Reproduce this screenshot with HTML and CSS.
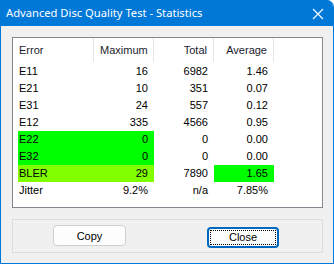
FILE: index.html
```html
<!DOCTYPE html>
<html>
<head>
<meta charset="utf-8">
<link rel="stylesheet" href="styles.css">
</head>
<body>
<div class="window">
  <div class="titlebar">
    <span class="title">Advanced Disc Quality Test - Statistics</span>
    <svg class="close-x" width="12" height="12" viewBox="0 0 12 12"><path d="M1 1 L11 11 M11 1 L1 11" stroke="#fff" stroke-width="1.1" fill="none"/></svg>
  </div>
  <div class="content">
    <div class="list">
      <div class="row header">
        <div class="c c1">Error</div>
        <div class="c c2">Maximum</div>
        <div class="c c3">Total</div>
        <div class="c c4">Average</div>
      </div>
      <div class="row"><div class="c c1"><span>E11</span></div><div class="c c2">16</div><div class="c c3">6982</div><div class="c c4">1.46</div></div>
      <div class="row"><div class="c c1"><span>E21</span></div><div class="c c2">10</div><div class="c c3">351</div><div class="c c4">0.07</div></div>
      <div class="row"><div class="c c1"><span>E31</span></div><div class="c c2">24</div><div class="c c3">557</div><div class="c c4">0.12</div></div>
      <div class="row"><div class="c c1"><span>E12</span></div><div class="c c2">335</div><div class="c c3">4566</div><div class="c c4">0.95</div></div>
      <div class="row"><div class="c c1 green"><span>E22</span></div><div class="c c2 green">0</div><div class="c c3">0</div><div class="c c4">0.00</div></div>
      <div class="row"><div class="c c1 green"><span>E32</span></div><div class="c c2 green">0</div><div class="c c3">0</div><div class="c c4">0.00</div></div>
      <div class="row"><div class="c c1 lime"><span>BLER</span></div><div class="c c2 lime">29</div><div class="c c3">7890</div><div class="c c4 green">1.65</div></div>
      <div class="row"><div class="c c1"><span>Jitter</span></div><div class="c c2">9.2%</div><div class="c c3">n/a</div><div class="c c4">7.85%</div></div>
    </div>
    <div class="group">
      <button class="btn copy">Copy</button>
      <button class="btn close"><span class="focus">Close</span></button>
    </div>
  </div>
</div>
</body>
</html>
```

FILE: styles.css
```css
html, body {
  margin: 0;
  padding: 0;
  background: #ffffff;
}
body {
  font-family: "Liberation Sans", Arial, sans-serif;
  font-size: 11px;
  color: #000;
}
.window {
  width: 334px;
  height: 264px;
  box-sizing: border-box;
  border: 1px solid #0078d7;
  border-top: none;
  background: #f0f0f0;
  display: flex;
  flex-direction: column;
  border-top-right-radius: 7px;
  overflow: hidden;
}
.titlebar {
  height: 26px;
  margin: 0 -1px;
  background: #0078d7;
  color: #fff;
  display: flex;
  align-items: center;
  padding: 0 10px 0 6px;
}
.title {
  font-family: "Noto Sans", "Open Sans", sans-serif;
  font-size: 11.2px;
  line-height: 26px;
  flex: 1;
}
.close-x {
  margin-top: 1px;
}
.content {
  padding: 11px 10px 0 11px;
}
.list {
  width: 311px;
  height: 171px;
  box-sizing: border-box;
  border: 1px solid #828790;
  background: #fff;
}
.row {
  display: grid;
  grid-template-columns: 81px 60px 60px 60px;
  height: 17px;
  line-height: 17px;
}
.row.header {
  height: 25px;
  line-height: 25px;
}
.row.header .c {
  border-right: 1px solid #e5e5e5;
  color: #1a1a2e;
  height: 24px;
}
.c {
  padding: 0 6px;
  text-align: right;
  white-space: nowrap;
}
.c1 {
  text-align: left;
}
.row:not(.header) .c1 {
  margin-left: 5px;
  padding-left: 1px;
}
.green {
  background: #00ff00;
}
.lime {
  background: #80ff00;
}
.group {
  margin-top: 11px;
  height: 34px;
  width: 311px;
  box-sizing: border-box;
  border: 1px solid #dcdcdc;
  position: relative;
}
.btn {
  font-family: inherit;
  font-size: 11px;
  color: #000;
  box-sizing: border-box;
  width: 73px;
  height: 21px;
  border-radius: 4px;
  background: #fdfdfd;
  border: 1px solid #d0d0d0;
  padding: 0;
  position: absolute;
}
.copy {
  left: 40px;
  top: 5px;
}
.close {
  left: 194px;
  top: 7px;
  width: 72px;
  border: 2px solid #0067c0;
  padding: 1px;
}
.focus {
  display: block;
  height: 100%;
  box-sizing: border-box;
  border: 1px dotted #000;
  line-height: 13px;
}
```
